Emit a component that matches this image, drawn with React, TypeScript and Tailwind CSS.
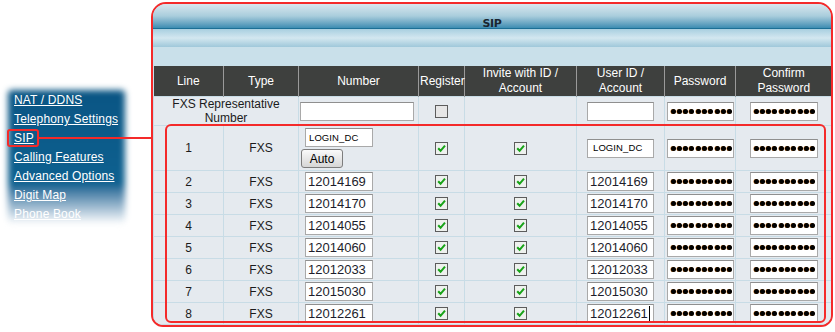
const navItems = [
  "NAT / DDNS",
  "Telephony Settings",
  "SIP",
  "Calling Features",
  "Advanced Options",
  "Digit Map",
  "Phone Book",
];

const lines = [
  { line: 1, number: "LOGIN_DC" },
  { line: 2, number: "12014169" },
  { line: 3, number: "12014170" },
  { line: 4, number: "12014055" },
  { line: 5, number: "12014060" },
  { line: 6, number: "12012033" },
  { line: 7, number: "12015030" },
  { line: 8, number: "12012261" },
];

const font = "font-['Liberation_Sans',Arial,sans-serif]";

function Box({
  children,
  className = "",
  mono = false,
}: {
  children?: React.ReactNode;
  className?: string;
  mono?: boolean;
}) {
  const txt = mono
    ? "text-[9.5px] text-black tracking-[0.1px]"
    : "text-[13px] text-[#1d1d2b]";
  return (
    <div
      className={`h-[19px] bg-white border border-[#a9a9a9] border-t-[#8f8f8f] flex items-center px-[2px] leading-none ${txt} ${className}`}
    >
      {children}
    </div>
  );
}

function Dots() {
  return (
    <div className="flex gap-[1.3px] pl-[1px]">
      {Array.from({ length: 10 }).map((_, i) => (
        <span key={i} className="w-[5px] h-[5px] rounded-full bg-black shadow-[-0.5px_0_0_#c06000]" />
      ))}
    </div>
  );
}

function Check({ checked }: { checked: boolean }) {
  return (
    <svg width="13" height="13" viewBox="0 0 13 13" className="mx-auto block">
      <rect x="0.5" y="0.5" width="12" height="12" fill={checked ? "#eef1ee" : "#e6e6e6"} stroke="#5c5c5c" />
      {checked && <path d="M3.2 6.2 L5.6 8.8 L10 3.6" stroke="#17a317" strokeWidth="2" fill="none" />}
    </svg>
  );
}

const cell = "border border-[#c8dce6] text-center align-middle p-0";

export default function App() {
  return (
    <div className={`relative w-[835px] h-[332px] bg-white ${font} overflow-hidden`}>
      <div className="flex">
        {/* left nav */}
        <div className="relative mt-[88px] ml-[6px] w-[121px] h-[138px]">
          <div className="absolute inset-[2px] rounded-[4px] bg-gradient-to-b from-[#0a5584] via-[#0e6190] via-70% to-white blur-[3px]" />
          <ul className="relative pl-[8px] pt-[3px]">
            {navItems.map((n) => (
              <li key={n} className="text-[12px] leading-[19px] text-white underline underline-offset-[1px] tracking-[0.15px]">
                {n}
              </li>
            ))}
          </ul>
        </div>

        {/* SIP panel */}
        <div className="ml-[24px] mt-[2px] w-[682px] h-[325px] border-2 border-[#f42a2a] rounded-[15px] rounded-b-[12px] overflow-hidden bg-[#c9e0ea]">
          <div className="h-[24px] bg-gradient-to-b from-[#d9e7ee] via-[#a9cddc] to-[#3c8db2] flex justify-center pt-[14px]">
            <span className="text-[11px] leading-[12px] font-bold text-[#1a2630] font-['DejaVu_Sans',sans-serif] tracking-[-0.3px]">SIP</span>
          </div>
          <div className="h-[1px] bg-[#1c6f95]" />
          <div className="h-[18px] bg-gradient-to-b from-[#a8cfe0] via-[#d3e7f0] to-[#9fc8da]" />
          <div className="h-[19px] bg-[#c9e0ea]" />
          <table className="table-fixed border-collapse w-[678px] text-[12px] text-[#1b1b1b]">
            <colgroup>
              <col className="w-[70px]" />
              <col className="w-[75px]" />
              <col className="w-[120px]" />
              <col className="w-[46px]" />
              <col className="w-[112px]" />
              <col className="w-[88px]" />
              <col className="w-[71px]" />
              <col className="w-[96px]" />
            </colgroup>
            <thead>
              <tr className="h-[30px] bg-[#3e403e] text-white leading-[15px]">
                {["Line", "Type", "Number", "Register", "Invite with ID / Account", "User ID / Account", "Password", "Confirm Password"].map((h, i) => (
                  <th key={h} className={`font-normal border-r border-[#9a9a9a] last:border-r-0 px-[1px] ${i === 4 ? "px-[14px]" : ""} ${i === 5 ? "px-[10px]" : ""} ${i === 7 ? "px-[18px]" : ""}`}>
                    {h}
                  </th>
                ))}
              </tr>
            </thead>
            <tbody className="bg-[#e5eaef]">
              <tr className="h-[29px]">
                <td colSpan={2} className={`${cell} leading-[14px]`}>
                  FXS Representative
                  <br />
                  Number
                </td>
                <td className={`${cell} text-left`}>
                  <Box className="w-[114px] ml-[1px]" />
                </td>
                <td className={cell}>
                  <Check checked={false} />
                </td>
                <td className={cell} />
                <td className={cell}>
                  <Box className="w-[67px] mx-auto" />
                </td>
                <td className={cell}>
                  <Box className="w-[67px] mx-auto"><Dots /></Box>
                </td>
                <td className={cell}>
                  <Box className="w-[68px] mx-auto"><Dots /></Box>
                </td>
              </tr>
              {lines.map((r) => (
                <tr key={r.line} className={r.line === 1 ? "h-[45px]" : "h-[22px]"}>
                  <td className={cell}>{r.line}</td>
                  <td className={cell}>FXS</td>
                  <td className={`${cell} text-left`}>
                    {r.line === 1 ? (
                      <div className="flex flex-col items-start">
                        <Box mono className="w-[68px] ml-[6px] pl-[3px]">LOGIN_DC</Box>
                        <button className="mt-[2px] ml-[2px] w-[42px] h-[19px] rounded-[3px] border border-[#7d7d7d] bg-gradient-to-b from-[#fafafa] to-[#d6d6d6] text-[12px] leading-none text-black">
                          Auto
                        </button>
                      </div>
                    ) : (
                      <Box className="w-[68px] ml-[6px] pl-[2px]">{r.number}</Box>
                    )}
                  </td>
                  <td className={cell}>
                    <Check checked />
                  </td>
                  <td className={cell}>
                    <Check checked />
                  </td>
                  <td className={cell}>
                    {r.line === 1 ? (
                      <Box mono className="w-[67px] mx-auto pl-[5px]">LOGIN_DC</Box>
                    ) : (
                      <Box className="w-[67px] mx-auto pl-[2px]">
                        {r.number}
                        {r.line === 8 && <span className="inline-block w-[1px] h-[15px] bg-black ml-[1px]" />}
                      </Box>
                    )}
                  </td>
                  <td className={cell}>
                    <Box className="w-[67px] mx-auto"><Dots /></Box>
                  </td>
                  <td className={cell}>
                    <Box className="w-[68px] mx-auto"><Dots /></Box>
                  </td>
                </tr>
              ))}
            </tbody>
          </table>
        </div>
      </div>

      {/* annotation overlays */}
      <div className="absolute left-[7px] top-[129px] w-[32px] h-[18px] border-2 border-[#f42a2a] rounded-[3px]" />
      <div className="absolute left-[39px] top-[137px] w-[113px] h-[2px] bg-[#f42a2a]" />
      <div className="absolute left-[165px] top-[124px] w-[661px] h-[199px] border-2 border-[#f42a2a] rounded-[6px]" />
    </div>
  );
}
